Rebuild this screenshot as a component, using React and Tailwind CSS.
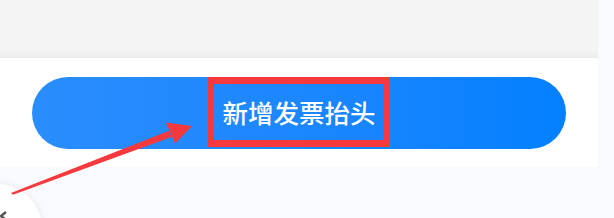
import React from 'react';

export default function App() {
  return (
    <div className="relative w-[614px] h-[218px] overflow-hidden flex bg-[#f9fafd]" style={{ fontFamily: '"Noto Sans CJK SC", "Noto Sans", sans-serif' }}>
      <div className="w-[598px] flex flex-col">
        <div className="h-[58px] bg-gradient-to-b from-[#f4f4f4] via-[#f4f4f4] via-85% to-[#ececec]" />
        <div className="bg-white pt-[19px] pb-[18px] px-[32px]">
          <button className="w-full h-[72px] rounded-full bg-gradient-to-r from-[#2a8dfd] to-[#0380ff] flex items-center justify-center">
            <span className="relative -top-[1px] h-[70px] border-y-[7px] border-x-[6px] border-[#f5393c] px-[8px] flex items-center text-white text-[25.5px] font-medium leading-none">
              新增发票抬头
            </span>
          </button>
        </div>
        <div className="flex-1 bg-[#f9fafd]" />
      </div>
      <div className="flex-1 bg-[#f9fafd]" />

      <div className="absolute left-[-48px] top-[184px] w-[90px] h-[90px] rounded-full bg-white shadow-[0_0_8px_rgba(0,0,0,0.08)]">
        <svg className="absolute left-[47px] top-[27px]" width="10" height="10" viewBox="0 0 10 10">
          <path d="M7 1 L2 5 L7 9" stroke="#555" strokeWidth="2.5" fill="none" />
        </svg>
      </div>

      <svg className="absolute left-0 top-0 pointer-events-none" width="614" height="218" viewBox="0 0 614 218">
        <polygon points="11,193 13,194.8 171.5,137 168.5,131" fill="#f5393c" />
        <polygon points="192,126 166,122.5 175,143.5" fill="#f5393c" />
      </svg>
    </div>
  );
}
